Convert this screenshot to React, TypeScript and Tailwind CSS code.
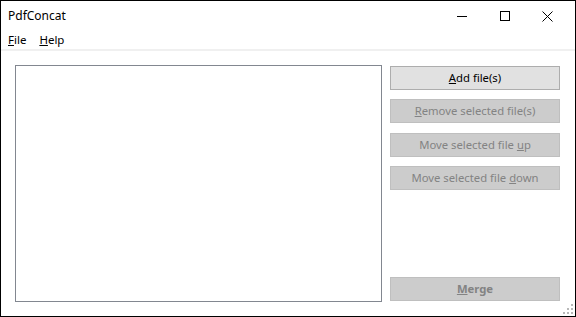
import React from 'react';

const font = { fontFamily: '"Noto Sans", "Open Sans", sans-serif' };

function Btn({ children, disabled, className = '' }: { children: React.ReactNode; disabled?: boolean; className?: string }) {
  return (
    <button
      className={
        'h-[24px] w-[170px] border text-[11.3px] leading-none ' +
        (disabled
          ? 'border-[#bfbfbf] bg-[#cccccc] text-[#838383] '
          : 'border-[#adadad] bg-[#e1e1e1] text-black ') +
        className
      }
    >
      {children}
    </button>
  );
}

export default function App() {
  return (
    <div
      className="relative flex h-[317px] w-[576px] flex-col border border-black bg-white text-black"
      style={font}
    >
      {/* title bar */}
      <div className="flex h-[30px] items-center justify-between">
        <span className="pl-[7px] text-[12px]">PdfConcat</span>
        <div className="flex h-full pr-[7px]">
          <div className="flex w-[42px] items-center justify-center">
            <div className="h-px w-[10px] bg-black" />
          </div>
          <div className="flex w-[43px] items-center justify-center">
            <div className="h-[10px] w-[10px] border border-black" />
          </div>
          <div className="flex w-[42px] items-center justify-center">
            <svg width="11" height="11" viewBox="0 0 11 11">
              <path d="M0.5 0.5 L10.5 10.5 M10.5 0.5 L0.5 10.5" stroke="black" strokeWidth="1" />
            </svg>
          </div>
        </div>
      </div>

      {/* menu bar */}
      <div className="flex h-[18px] items-center gap-[13px] pl-[7px] text-[11.5px]">
        <span><u>F</u>ile</span>
        <span><u>H</u>elp</span>
      </div>
      <div className="h-[2px] bg-[#f0f0f0]" />

      {/* content */}
      <div className="flex flex-1 pb-[14px] pl-[14px] pt-[14px]">
        <div className="h-full w-[367px] border border-[#828790] bg-white" />
        <div className="ml-[8px] flex flex-col">
          <Btn className="mt-px">
            <u>A</u>dd file(s)
          </Btn>
          <Btn disabled className="mt-[9px]">
            <u>R</u>emove selected file(s)
          </Btn>
          <Btn disabled className="mt-[10px]">
            Move selected file <u>u</u>p
          </Btn>
          <Btn disabled className="mt-[9px]">
            Move selected file <u>d</u>own
          </Btn>
          <Btn disabled className="mb-px mt-auto font-bold">
            <u>M</u>erge
          </Btn>
        </div>
      </div>

      {/* size grip */}
      <svg className="absolute bottom-[2px] right-[2px]" width="10" height="10" viewBox="0 0 10 10">
        <g fill="#b8b8b8">
          <rect x="8" y="0" width="2" height="2" />
          <rect x="4" y="4" width="2" height="2" />
          <rect x="8" y="4" width="2" height="2" />
          <rect x="0" y="8" width="2" height="2" />
          <rect x="4" y="8" width="2" height="2" />
          <rect x="8" y="8" width="2" height="2" />
        </g>
      </svg>
    </div>
  );
}
